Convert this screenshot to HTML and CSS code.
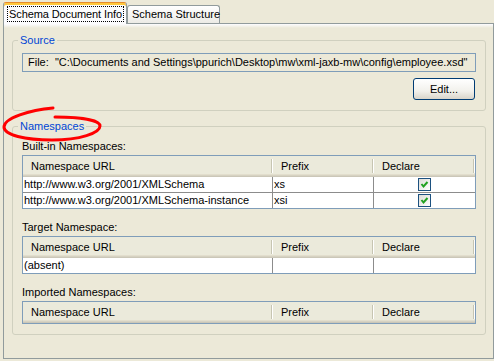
FILE: index.html
```html
<!DOCTYPE html>
<html lang="en">
<head>
    <meta charset="UTF-8">
    <title>Schema Document Info</title>
    <link rel="stylesheet" href="styles.css">
</head>
<body>
    <div class="tabs">
        <div class="tab active"><span class="focus">Schema Document Info</span></div>
        <div class="tab">Schema Structure</div>
    </div>

    <div class="page">
        <fieldset class="group source">
            <legend>Source</legend>
            <div class="field">File:&nbsp; "C:\Documents and Settings\ppurich\Desktop\mw\xml-jaxb-mw\config\employee.xsd"</div>
            <div class="actions"><button class="btn">Edit...</button></div>
        </fieldset>

        <fieldset class="group namespaces">
            <legend>Namespaces</legend>

            <div class="label">Built-in Namespaces:</div>
            <div class="grid">
                <div class="head">Namespace URL</div>
                <div class="head">Prefix</div>
                <div class="head">Declare</div>
                <div class="cell">http://www.w3.org/2001/XMLSchema</div>
                <div class="cell">xs</div>
                <div class="cell check"><span class="box"><svg width="11" height="11" viewBox="0 0 11 11"><path d="M2.5 5 L4.5 7.5 L8.5 3" fill="none" stroke="#21a121" stroke-width="2"/></svg></span></div>
                <div class="cell sep">http://www.w3.org/2001/XMLSchema-instance</div>
                <div class="cell sep">xsi</div>
                <div class="cell sep check"><span class="box"><svg width="11" height="11" viewBox="0 0 11 11"><path d="M2.5 5 L4.5 7.5 L8.5 3" fill="none" stroke="#21a121" stroke-width="2"/></svg></span></div>
            </div>

            <div class="label">Target Namespace:</div>
            <div class="grid">
                <div class="head">Namespace URL</div>
                <div class="head">Prefix</div>
                <div class="head">Declare</div>
                <div class="cell">(absent)</div>
                <div class="cell"></div>
                <div class="cell"></div>
            </div>

            <div class="label">Imported Namespaces:</div>
            <div class="grid last">
                <div class="head">Namespace URL</div>
                <div class="head">Prefix</div>
                <div class="head">Declare</div>
            </div>
        </fieldset>
    </div>

    <!-- hand-drawn red circle around the Namespaces title -->
    <svg class="mark" width="110" height="40" viewBox="0 104 110 40">
        <path d="M53 108 C30 110, 4 118, 4 127 C4 135, 25 140, 52 140 C80 140, 100 133, 100 126 C100 120, 80 117, 55 117"
              fill="none" stroke="#f00" stroke-width="3" stroke-linecap="round"/>
    </svg>
</body>
</html>
```

FILE: styles.css
```css
body {
    margin: 0;
    width: 494px;
    height: 361px;
    overflow: hidden;
    position: relative;
    background-color: #ece9d8;
    font-family: "Liberation Sans", Arial, sans-serif;
    font-size: 11px;
    color: #000;
}

/* Tab strip */
.tabs {
    display: flex;
    align-items: flex-end;
    box-sizing: border-box;
    height: 23px;
    padding: 2px 0 0 3px;
}

.tab {
    flex: none;
    box-sizing: border-box;
    width: 93px;
    height: 18px;
    padding-left: 4px;
    line-height: 16px;
    white-space: nowrap;
    border: 1px solid #919b9c;
    border-bottom: none;
    border-radius: 3px 3px 0 0;
    background: linear-gradient(#fff, #ecebe6);
}

.tab.active {
    position: relative;
    z-index: 1;
    width: 124px;
    height: 22px;
    margin-bottom: -1px;
    padding: 3px 0 0 3px;
    border-top: 1px solid #e68b2c;
    box-shadow: inset 0 2px #ffc83c;
    background: #fcfcfe;
}

.focus {
    display: block;
    width: 117px;
    height: 16px;
    box-sizing: border-box;
    padding-left: 1px;
    line-height: 14px;
    letter-spacing: -0.1px;
    border: 1px dotted #000;
}

/* Tab page */
.page {
    box-sizing: border-box;
    width: 491px;
    height: 336px;
    margin-left: 3px;
    padding-top: 10px;
    border: 1px solid #919b9c;
    background: linear-gradient(#fcfcfe, #ece9d8 4px);
}

.group {
    margin: 0 7px 0 8px;
    padding: 6px 9px 10px 9px;
    border: 1px solid #d0d0bf;
    border-radius: 3px;
    min-width: 0;
}

.group legend {
    margin-left: -4px;
    padding: 0 2px;
    line-height: 13px;
    color: #0046d5;
}

.namespaces {
    margin-top: 9px;
    padding-top: 7px;
}

.field {
    box-sizing: border-box;
    height: 19px;
    padding-left: 5px;
    line-height: 17px;
    border: 1px solid #7f9db9;
    white-space: nowrap;
}

.actions {
    display: flex;
    justify-content: flex-end;
    margin-top: 6px;
    padding-right: 1px;
}

.btn {
    width: 62px;
    height: 22px;
    padding: 0;
    font: inherit;
    color: #000;
    border: 1px solid #003c74;
    border-radius: 3px;
    background: linear-gradient(#fff, #f2f1ec 60%, #d9d5ca);
}

.label {
    line-height: 13px;
    margin-bottom: 2px;
}

/* Tables */
.grid {
    display: grid;
    grid-template-columns: 250px 101px 101px;
    border: 1px solid #7f9db9;
    margin-bottom: 12px;
}

.grid.last {
    margin-bottom: 0;
}

.head {
    height: 21px;
    padding-left: 8px;
    line-height: 20px;
    background:
        linear-gradient(#c7c5b2, #c7c5b2) right 1px top 3px / 1px 14px no-repeat,
        linear-gradient(#fff, #fff) right 0 top 3px / 1px 14px no-repeat,
        #ebeadb;
    box-shadow: inset 0 -1px #cbc7b8, inset 0 -2px #d6d2c2, inset 0 -3px #e2decd;
}

.cell {
    height: 15px;
    padding-left: 1px;
    line-height: 15px;
    background: #fff;
    border-right: 1px solid #8c8c8c;
    white-space: nowrap;
    overflow: hidden;
}

.cell:nth-child(3n) {
    border-right: none;
}

.cell.sep {
    border-top: 1px solid #8c8c8c;
}

.check {
    display: flex;
    justify-content: center;
    align-items: center;
    padding-left: 0;
}

.box {
    display: flex;
    width: 13px;
    height: 13px;
    box-sizing: border-box;
    border: 1px solid #1c5180;
    background: linear-gradient(135deg, #dcdcd7, #fff);
}

.mark {
    position: absolute;
    left: 0;
    top: 104px;
    pointer-events: none;
}
```
